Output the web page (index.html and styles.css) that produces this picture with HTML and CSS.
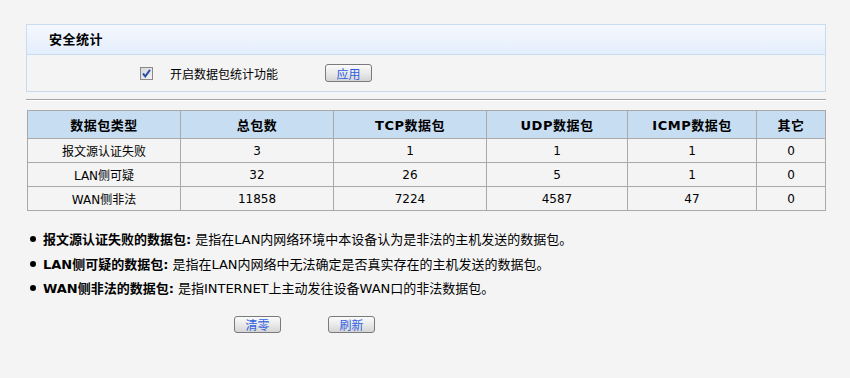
FILE: index.html
```html
<!DOCTYPE html>
<html lang="zh-CN">
<head>
    <meta charset="UTF-8">
    <title>安全统计</title>
    <link rel="stylesheet" href="styles.css">
</head>
<body>
    <div class="page">
        <div class="panel">
            <div class="panel-title">安全统计</div>
            <div class="panel-body">
                <span class="check"><svg width="11" height="11" viewBox="0 0 11 11"><path d="M2 5.5 L4.3 8.3 L9 1.8" fill="none" stroke="#2b4fa8" stroke-width="2"/></svg></span>
                <span class="check-label">开启数据包统计功能</span>
                <button class="btn">应用</button>
            </div>
        </div>
        <div class="rule"></div>

        <table class="stats">
            <tr>
                <th class="c1">数据包类型</th>
                <th class="c2">总包数</th>
                <th class="c3">TCP数据包</th>
                <th class="c4">UDP数据包</th>
                <th class="c5">ICMP数据包</th>
                <th>其它</th>
            </tr>
            <tr><td>报文源认证失败</td><td>3</td><td>1</td><td>1</td><td>1</td><td>0</td></tr>
            <tr><td>LAN侧可疑</td><td>32</td><td>26</td><td>5</td><td>1</td><td>0</td></tr>
            <tr><td>WAN侧非法</td><td>11858</td><td>7224</td><td>4587</td><td>47</td><td>0</td></tr>
        </table>

        <ul class="notes">
            <li><b>报文源认证失败的数据包:</b> 是指在LAN内网络环境中本设备认为是非法的主机发送的数据包。</li>
            <li><b>LAN侧可疑的数据包:</b> 是指在LAN内网络中无法确定是否真实存在的主机发送的数据包。</li>
            <li><b>WAN侧非法的数据包:</b> 是指INTERNET上主动发往设备WAN口的非法数据包。</li>
        </ul>

        <div class="actions">
            <button class="btn">清零</button>
            <button class="btn">刷新</button>
        </div>
    </div>
</body>
</html>
```

FILE: styles.css
```css
body{
    margin: 0;
    background-color: #f4f4f4;
    font-family: 'DejaVu Sans', 'Noto Sans CJK SC', sans-serif;
    font-size: 12px;
    color: #000;
}

.page{
    padding: 24px 0 0 26px;
    width: 800px;
}

.panel{
    border: 1px solid #c8dcf0;
}

.panel-title{
    height: 29px;
    line-height: 29px;
    padding-left: 22px;
    font-size: 13px;
    font-weight: 700;
    letter-spacing: 0.5px;
    background: linear-gradient(#f5f8fe, #e3eefc);
    border-bottom: 1px solid #c8dcf0;
}

.panel-body{
    height: 36px;
    display: flex;
    align-items: center;
    padding-left: 113px;
}

.check{
    width: 11px;
    height: 11px;
    border: 1px solid #8a8a8a;
    background: linear-gradient(135deg, #d8d8d8, #f2f2f2);
    display: flex;
    margin-top: 1px;
}

.check-label{
    margin-left: 17px;
    width: 155px;
}

.btn{
    width: 47px;
    height: 18px;
    padding: 0;
    border: 1px solid #7a7a7a;
    border-radius: 3px;
    background: linear-gradient(#fbfbfb, #e6e6e6 60%, #d4d4d4);
    color: #2f5ee0;
    font-family: 'Noto Sans CJK SC', sans-serif;
    font-size: 12px;
    line-height: 15px;
}

.rule{
    margin-top: 7px;
    border-top: 1px solid #a6a6a6;
    border-bottom: 1px solid #fff;
}

.stats{
    margin: 9px 0 0 1px;
    width: 799px;
    border-collapse: collapse;
    text-align: center;
}

.stats th, .stats td{
    border: 1px solid #a9a9a9;
    padding: 0;
}

.stats th{
    height: 27px;
    background-color: #c7ddf1;
    font-size: 13px;
    font-weight: 700;
    letter-spacing: 0.5px;
}

.stats td{
    height: 23px;
}

.c1, .c2, .c3{
    width: 152px;
}
.c4{
    width: 140px;
}
.c5{
    width: 128px;
}

.notes{
    list-style: none;
    margin: 15px 0 0 0;
    padding: 0 0 0 4px;
    font-size: 13px;
}

.notes li{
    height: 25px;
    display: flex;
    align-items: center;
}

.notes li + li + li{
    height: 23px;
}

.notes li::before{
    content: '';
    width: 6px;
    height: 6px;
    border-radius: 50%;
    background-color: #000;
    margin-right: 7px;
}

.notes b{
    margin-right: 4px;
}

.actions{
    margin-top: 17px;
    padding-left: 208px;
    display: flex;
    gap: 47px;
}

.actions .btn{
    height: 17px;
}
```
